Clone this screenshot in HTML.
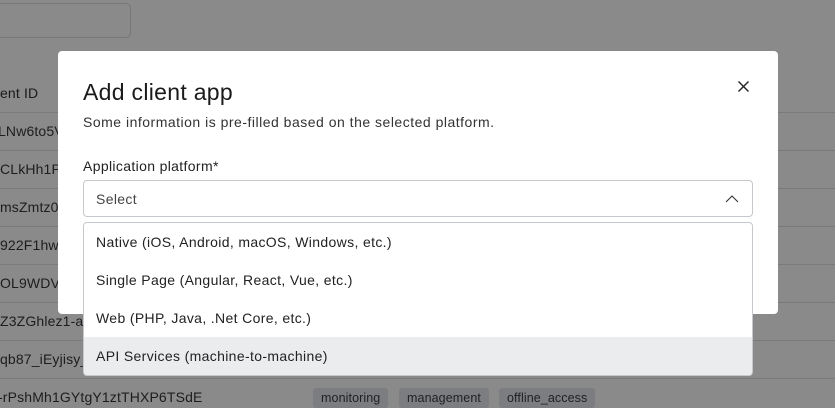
<!DOCTYPE html>
<html><head><style>
*{box-sizing:border-box;margin:0;padding:0}
body{width:835px;height:408px;overflow:hidden;background:#8a8a8a;font-family:"Liberation Sans",sans-serif;position:relative;color:#1f2023;letter-spacing:0.35px}
.bgt{position:absolute;font-size:14px;color:#1d1d1f;white-space:nowrap;letter-spacing:0.15px}
.line{position:absolute;left:0;width:835px;height:1px;background:#7a7a7a}
.tag{position:absolute;top:388px;height:20px;background:#7b7d80;border-radius:3px;font-size:12.5px;color:#202124;line-height:20px;padding:0 8px;letter-spacing:0.1px}
.modal{position:absolute;left:58px;top:51px;width:720px;height:263px;background:#fff;border-radius:4px}
.item{height:38px;line-height:38px;padding-left:12px;font-size:14px;color:#222}
</style></head><body>
<div style="position:absolute;left:-10px;top:3px;width:141px;height:35px;border:1px solid #777;border-radius:5px"></div>
<div class="bgt" style="left:0;top:85px;font-size:14px;color:#1a1a1a">ent ID</div>
<div class="line" style="top:112px"></div><div class="line" style="top:150px"></div><div class="line" style="top:188px"></div><div class="line" style="top:226px"></div><div class="line" style="top:264px"></div><div class="line" style="top:302px"></div><div class="line" style="top:340px"></div><div class="line" style="top:378px"></div>
<div class="bgt" style="left:-2px;top:123px">LNw6to5V</div>
<div class="bgt" style="left:0;top:161px">CLkHh1Pa</div>
<div class="bgt" style="left:0;top:199px">msZmtz0</div>
<div class="bgt" style="left:0;top:237px">922F1hwl</div>
<div class="bgt" style="left:0;top:275px">OL9WDV</div>
<div class="bgt" style="left:0;top:313px">Z3ZGhlez1-al</div>
<div class="bgt" style="left:0;top:351px">qb87_iEyjisy_C</div>
<div class="bgt" style="left:-2px;top:389px">-rPshMh1GYtgY1ztTHXP6TSdE</div>
<div class="tag" style="left:313px">monitoring</div>
<div class="tag" style="left:399px">management</div>
<div class="tag" style="left:499px">offline_access</div>
<div class="modal">
  <div style="position:absolute;left:25px;top:28px;font-size:23px;color:#1a1a1a;letter-spacing:0.3px">Add client app</div>
  <div style="position:absolute;left:25px;top:63px;font-size:14px;color:#333;letter-spacing:0.5px">Some information is pre-filled based on the selected platform.</div>
  <svg style="position:absolute;left:680px;top:30px" width="11" height="11" viewBox="0 0 11 11"><path d="M0.5 0.5L10.5 10.5M10.5 0.5L0.5 10.5" stroke="#222" stroke-width="1.4"/></svg>
  <div style="position:absolute;left:25px;top:107px;font-size:14px;color:#222">Application platform*</div>
  <div style="position:absolute;left:25px;top:129px;width:670px;height:37px;border:1px solid #c5c8cc;border-radius:4px">
    <div style="position:absolute;left:12px;top:10px;font-size:14px;color:#444">Select</div>
    <svg style="position:absolute;left:641px;top:13px" width="14" height="9" viewBox="0 0 14 9"><path d="M1 8L7 2L13 8" stroke="#333" stroke-width="1.1" fill="none"/></svg>
  </div>
</div>
<div style="position:absolute;left:83px;top:222px;width:670px;height:154px;background:#fff;border:1px solid #c5c8cc;border-radius:4px;overflow:hidden">
  <div class="item">Native (iOS, Android, macOS, Windows, etc.)</div>
  <div class="item">Single Page (Angular, React, Vue, etc.)</div>
  <div class="item">Web (PHP, Java, .Net Core, etc.)</div>
  <div class="item" style="background:#ebecee">API Services (machine-to-machine)</div>
</div>
</body></html>
